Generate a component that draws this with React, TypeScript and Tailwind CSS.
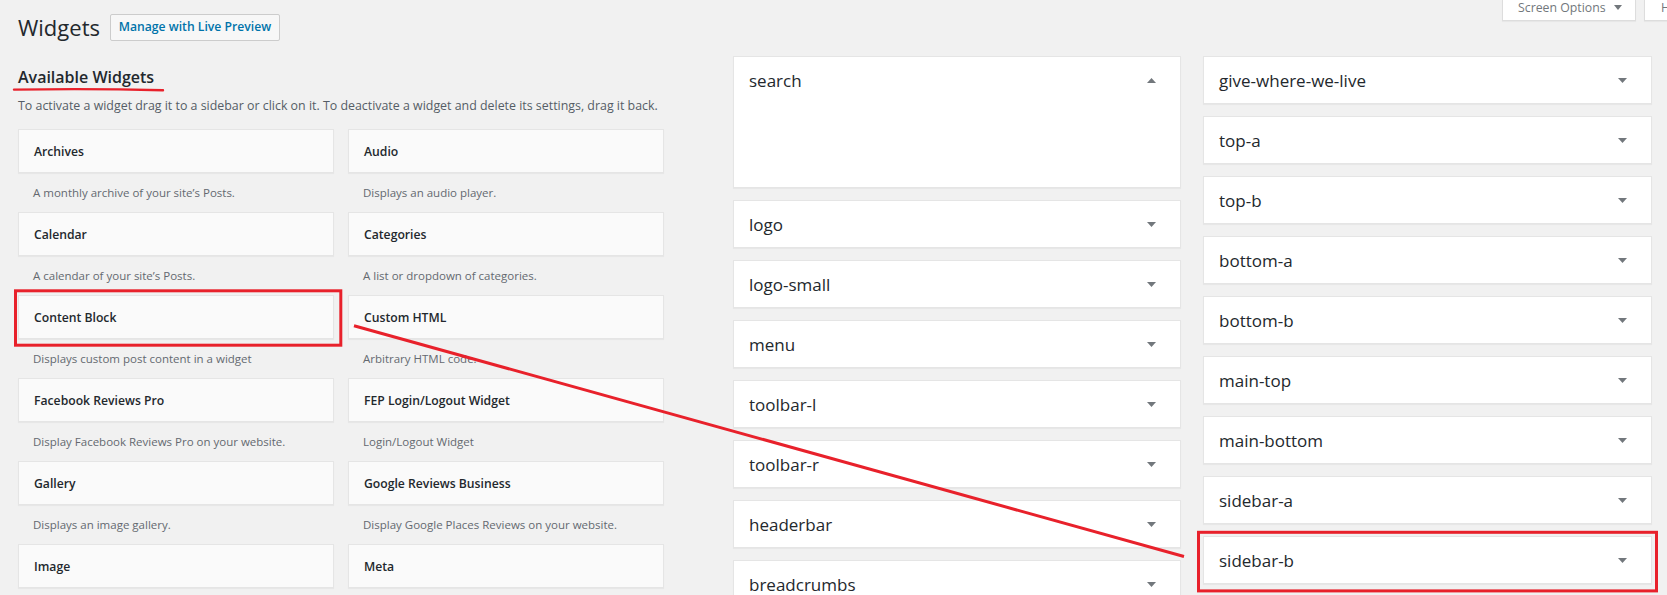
const availableWidgets = [
  { title: "Archives", desc: "A monthly archive of your site’s Posts." },
  { title: "Audio", desc: "Displays an audio player." },
  { title: "Calendar", desc: "A calendar of your site’s Posts." },
  { title: "Categories", desc: "A list or dropdown of categories." },
  { title: "Content Block", desc: "Displays custom post content in a widget" },
  { title: "Custom HTML", desc: "Arbitrary HTML code." },
  { title: "Facebook Reviews Pro", desc: "Display Facebook Reviews Pro on your website." },
  { title: "FEP Login/Logout Widget", desc: "Login/Logout Widget" },
  { title: "Gallery", desc: "Displays an image gallery." },
  { title: "Google Reviews Business", desc: "Display Google Places Reviews on your website." },
  { title: "Image", desc: "" },
  { title: "Meta", desc: "" },
];

const middleSidebars = ["logo", "logo-small", "menu", "toolbar-l", "toolbar-r", "headerbar", "breadcrumbs"];

const rightSidebars = [
  "give-where-we-live",
  "top-a",
  "top-b",
  "bottom-a",
  "bottom-b",
  "main-top",
  "main-bottom",
  "sidebar-a",
  "sidebar-b",
];

function Arrow({ up = false }: { up?: boolean }) {
  return (
    <svg width="9" height="5" viewBox="0 0 9 5" className="shrink-0">
      <polygon points={up ? "0,5 9,5 4.5,0" : "0,0 9,0 4.5,5"} fill="#72777c" />
    </svg>
  );
}

function SidebarBox({ name }: { name: string }) {
  return (
    <div className="flex h-[48px] shrink-0 items-center justify-between border border-[#e5e5e5] bg-white pl-[15px] pr-[24px] shadow-[0_1px_1px_rgba(0,0,0,0.04)]">
      <h2 className="pt-[1px] text-[17px] leading-[24px] text-[#23282d]">{name}</h2>
      <Arrow />
    </div>
  );
}

function Annotations() {
  return (
    <svg
      className="pointer-events-none absolute left-0 top-0"
      width="1667"
      height="595"
      viewBox="0 0 1667 595"
      fill="none"
    >
      <path d="M14 89.6 Q90 88.4 163 90.2" stroke="#e8212b" strokeWidth="2.4" strokeLinecap="round" />
      <rect x="15.5" y="290.8" width="325.3" height="54.4" stroke="#e8212b" strokeWidth="3" />
      <line x1="354" y1="325.7" x2="1184" y2="556.5" stroke="#e8212b" strokeWidth="3" />
      <rect x="1198.5" y="532.3" width="458" height="58.6" stroke="#e8212b" strokeWidth="3" />
    </svg>
  );
}

export default function App() {
  return (
    <div className="relative flex h-[595px] w-full overflow-hidden bg-[#f1f1f1] pl-[18px] font-['Open_Sans',sans-serif]">
      {/* available widgets */}
      <div className="w-[646px] shrink-0">
        <div className="mt-[13px] flex h-[29px] items-center">
          <h1 className="text-[22px] leading-[29px] text-[#23282d]">Widgets</h1>
          <a className="ml-[10px] flex h-[27px] w-[170px] items-center justify-center rounded-[2px] border border-[#ccc] bg-[#f7f7f7] text-[12.2px] font-semibold text-[#0073aa]">
            Manage with Live Preview
          </a>
        </div>
        <h2 className="mt-[24px] text-[16px] font-semibold leading-[22px] text-[#23282d]">Available Widgets</h2>
        <p className="mt-[9px] whitespace-nowrap text-[12.4px] leading-[17px] text-[#555d66]">
          To activate a widget drag it to a sidebar or click on it. To deactivate a widget and delete its settings, drag it back.
        </p>
        <div className="mt-[15px] grid grid-cols-[316px_316px] gap-x-[14px]">
          {availableWidgets.map((w) => (
            <div key={w.title} className="flex flex-col">
              <div className="flex h-[44px] items-center border border-[#e5e5e5] bg-[#fafafa] px-[15px] shadow-[0_1px_1px_rgba(0,0,0,0.04)]">
                <h3 className="text-[12.2px] font-semibold leading-[17px] text-[#23282d]">{w.title}</h3>
              </div>
              {w.desc && (
                <div className="h-[39px] px-[15px] pt-[12px] text-[11.5px] leading-[16px] text-[#646970]">{w.desc}</div>
              )}
            </div>
          ))}
        </div>
      </div>

      {/* first sidebar column */}
      <div className="ml-[69px] flex w-[448px] shrink-0 flex-col gap-[12px] pt-[56px]">
        <div className="h-[132px] shrink-0 border border-[#e5e5e5] bg-white shadow-[0_1px_1px_rgba(0,0,0,0.04)]">
          <div className="flex h-[46px] items-center justify-between pl-[15px] pr-[24px]">
            <h2 className="pt-[1px] text-[17px] leading-[24px] text-[#23282d]">search</h2>
            <Arrow up />
          </div>
        </div>
        {middleSidebars.map((s) => (
          <SidebarBox key={s} name={s} />
        ))}
      </div>

      {/* second sidebar column */}
      <div className="ml-[22px] flex w-[449px] shrink-0 flex-col">
        <div className="flex h-[21px] shrink-0 gap-[8px] whitespace-nowrap pl-[299px]">
          <button className="flex h-[21px] w-[134px] shrink-0 items-start gap-[8px] border-x border-b border-[#ddd] bg-white pl-[15px] shadow-[0_1px_1px_rgba(0,0,0,0.04)]">
            <span className="text-[12.3px] leading-[16px] text-[#72777c]">Screen Options</span>
            <span className="mt-[5px]">
              <svg width="8" height="5" viewBox="0 0 8 5">
                <polygon points="0,0 8,0 4,5" fill="#72777c" />
              </svg>
            </span>
          </button>
          <button className="flex h-[21px] w-[70px] shrink-0 items-start gap-[8px] border-x border-b border-[#ddd] bg-white pl-[16px] shadow-[0_1px_1px_rgba(0,0,0,0.04)]">
            <span className="text-[12.3px] leading-[16px] text-[#72777c]">Help</span>
          </button>
        </div>
        <div className="mt-[35px] flex flex-col gap-[12px]">
          {rightSidebars.map((s) => (
            <SidebarBox key={s} name={s} />
          ))}
        </div>
      </div>

      <Annotations />
    </div>
  );
}
